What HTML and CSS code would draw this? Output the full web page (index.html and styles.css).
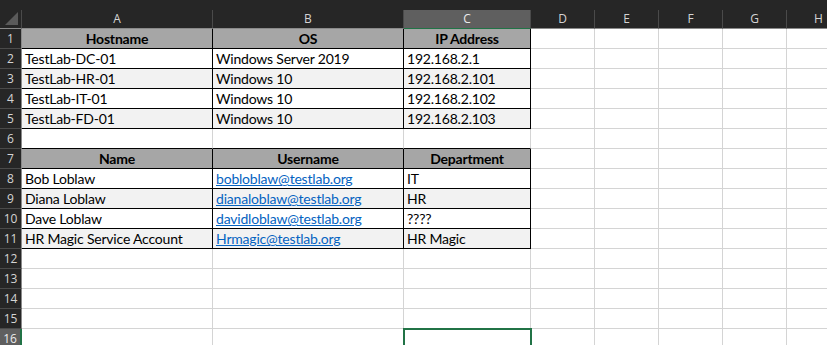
FILE: index.html
```html
<!DOCTYPE html>
<html lang="en">
<head>
    <meta charset="UTF-8">
    <meta name="viewport" content="width=device-width, initial-scale=1.0">
    <title>Book1 - Excel</title>
    <link rel="stylesheet" href="styles.css">
</head>
<body>
    <div class="sheet">
        <div class="topbar"></div>
        <table class="grid">
            <colgroup>
                <col class="c-row">
                <col class="c-a">
                <col class="c-b">
                <col class="c-c">
                <col class="c-n">
                <col class="c-n">
                <col class="c-n">
                <col class="c-n">
                <col class="c-n">
            </colgroup>
            <thead>
                <tr>
                    <th class="corner"><span class="tri"></span></th>
                    <th class="colhead">A</th>
                    <th class="colhead">B</th>
                    <th class="colhead active">C</th>
                    <th class="colhead">D</th>
                    <th class="colhead">E</th>
                    <th class="colhead">F</th>
                    <th class="colhead">G</th>
                    <th class="colhead">H</th>
                </tr>
            </thead>
            <tbody>
                <tr>
                    <th class="rowhead">1</th>
                    <td class="tb hd">Hostname</td>
                    <td class="tb hd">OS</td>
                    <td class="tb hd">IP Address</td>
                    <td></td><td></td><td></td><td></td><td></td>
                </tr>
                <tr>
                    <th class="rowhead">2</th>
                    <td class="tb">TestLab-DC-01</td>
                    <td class="tb">Windows Server 2019</td>
                    <td class="tb">192.168.2.1</td>
                    <td></td><td></td><td></td><td></td><td></td>
                </tr>
                <tr>
                    <th class="rowhead">3</th>
                    <td class="tb alt">TestLab-HR-01</td>
                    <td class="tb alt">Windows 10</td>
                    <td class="tb alt">192.168.2.101</td>
                    <td></td><td></td><td></td><td></td><td></td>
                </tr>
                <tr>
                    <th class="rowhead">4</th>
                    <td class="tb">TestLab-IT-01</td>
                    <td class="tb">Windows 10</td>
                    <td class="tb">192.168.2.102</td>
                    <td></td><td></td><td></td><td></td><td></td>
                </tr>
                <tr>
                    <th class="rowhead">5</th>
                    <td class="tb alt">TestLab-FD-01</td>
                    <td class="tb alt">Windows 10</td>
                    <td class="tb alt">192.168.2.103</td>
                    <td></td><td></td><td></td><td></td><td></td>
                </tr>
                <tr>
                    <th class="rowhead">6</th>
                    <td class="above"></td><td class="above"></td><td class="above"></td>
                    <td></td><td></td><td></td><td></td><td></td>
                </tr>
                <tr>
                    <th class="rowhead">7</th>
                    <td class="tb hd">Name</td>
                    <td class="tb hd">Username</td>
                    <td class="tb hd">Department</td>
                    <td></td><td></td><td></td><td></td><td></td>
                </tr>
                <tr>
                    <th class="rowhead">8</th>
                    <td class="tb">Bob Loblaw</td>
                    <td class="tb"><a href="#">bobloblaw@testlab.org</a></td>
                    <td class="tb">IT</td>
                    <td></td><td></td><td></td><td></td><td></td>
                </tr>
                <tr>
                    <th class="rowhead">9</th>
                    <td class="tb alt">Diana Loblaw</td>
                    <td class="tb alt"><a href="#">dianaloblaw@testlab.org</a></td>
                    <td class="tb alt">HR</td>
                    <td></td><td></td><td></td><td></td><td></td>
                </tr>
                <tr>
                    <th class="rowhead">10</th>
                    <td class="tb">Dave Loblaw</td>
                    <td class="tb"><a href="#">davidloblaw@testlab.org</a></td>
                    <td class="tb">????</td>
                    <td></td><td></td><td></td><td></td><td></td>
                </tr>
                <tr>
                    <th class="rowhead">11</th>
                    <td class="tb alt">HR Magic Service Account</td>
                    <td class="tb alt"><a href="#">Hrmagic@testlab.org</a></td>
                    <td class="tb alt">HR Magic</td>
                    <td></td><td></td><td></td><td></td><td></td>
                </tr>
                <tr>
                    <th class="rowhead">12</th>
                    <td></td><td></td><td></td><td></td><td></td><td></td><td></td><td></td>
                </tr>
                <tr>
                    <th class="rowhead">13</th>
                    <td></td><td></td><td></td><td></td><td></td><td></td><td></td><td></td>
                </tr>
                <tr>
                    <th class="rowhead">14</th>
                    <td></td><td></td><td></td><td></td><td></td><td></td><td></td><td></td>
                </tr>
                <tr>
                    <th class="rowhead">15</th>
                    <td></td><td></td><td></td><td></td><td></td><td></td><td></td><td></td>
                </tr>
                <tr>
                    <th class="rowhead active">16</th>
                    <td></td><td></td><td class="selected"></td><td></td><td></td><td></td><td></td><td></td>
                </tr>
            </tbody>
        </table>
    </div>
</body>
</html>
```

FILE: styles.css
```css
:root {
    --chrome: #262626;
    --chrome-line: #4a4a4a;
    --chrome-active: #5f5f5f;
    --chrome-text: #d4d4d4;
    --gridline: #d4d4d4;
    --excel-green: #217346;
}

body {
    margin: 0;
    background: #ffffff;
    overflow: hidden;
}

.sheet {
    width: 827px;
    height: 345px;
    overflow: hidden;
    background: #ffffff;
}

.topbar {
    height: 10px;
    background: var(--chrome);
}

.grid {
    table-layout: fixed;
    border-collapse: separate;
    border-spacing: 0;
    width: 851px;
    font-family: Lato, "Liberation Sans", sans-serif;
    font-size: 14px;
    letter-spacing: -0.2px;
    color: #000000;
}

.c-row { width: 22px; }
.c-a { width: 191px; }
.c-b { width: 191px; }
.c-c { width: 127px; }
.c-n { width: 64px; }

.grid td {
    height: 19px;
    padding: 0 3px;
    border-right: 1px solid var(--gridline);
    border-bottom: 1px solid var(--gridline);
    line-height: 19px;
    vertical-align: bottom;
    white-space: nowrap;
    overflow: hidden;
}

/* column and row headers */
.colhead,
.corner {
    height: 18px;
    padding: 0;
    background: var(--chrome);
    color: var(--chrome-text);
    font-family: "Open Sans", "Noto Sans", sans-serif;
    font-size: 12px;
    font-weight: 400;
    letter-spacing: 0;
    line-height: 18px;
    border-right: 1px solid var(--chrome-line);
    border-bottom: 1px solid #8a8a8a;
}

.colhead.active {
    background: var(--chrome-active);
    color: #ececec;
    border-bottom-color: var(--excel-green);
}

.corner {
    position: relative;
}

.corner .tri {
    position: absolute;
    right: 3px;
    bottom: 3px;
    width: 0;
    height: 0;
    border-left: 13px solid transparent;
    border-bottom: 13px solid #5a5a5a;
}

.rowhead {
    height: 19px;
    padding: 0;
    background: var(--chrome);
    color: var(--chrome-text);
    font-family: "Open Sans", "Noto Sans", sans-serif;
    font-size: 12px;
    font-weight: 400;
    letter-spacing: 0;
    line-height: 19px;
    text-align: center;
    border-right: 1px solid #8a8a8a;
    border-bottom: 1px solid var(--chrome-line);
}

.rowhead.active {
    background: var(--chrome-active);
    color: #ececec;
    border-right: 2px solid var(--excel-green);
}

/* the two formatted tables */
.grid td.tb {
    border-right-color: #000000;
    border-bottom-color: #000000;
}

.grid td.above {
    border-bottom-color: #000000;
}

.grid td.hd {
    background: #a6a6a6;
    font-weight: 700;
    text-align: center;
}

.grid td.alt {
    background: #f2f2f2;
}

.grid a {
    color: #0563c1;
    text-decoration: underline;
}

.grid td.selected {
    outline: 2px solid var(--excel-green);
    outline-offset: -1px;
}
```
